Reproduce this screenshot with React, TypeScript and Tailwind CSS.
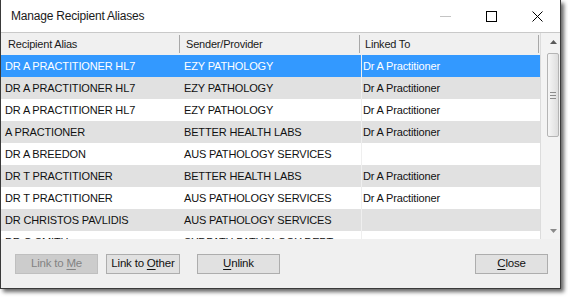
import { Fragment } from 'react';

const rows = [
  { alias: 'DR A PRACTITIONER HL7', sender: 'EZY PATHOLOGY', linked: 'Dr A Practitioner' },
  { alias: 'DR A PRACTITIONER HL7', sender: 'EZY PATHOLOGY', linked: 'Dr A Practitioner' },
  { alias: 'DR A PRACTITIONER HL7', sender: 'EZY PATHOLOGY', linked: 'Dr A Practitioner' },
  { alias: 'A PRACTIONER', sender: 'BETTER HEALTH LABS', linked: 'Dr A Practitioner' },
  { alias: 'DR A BREEDON', sender: 'AUS PATHOLOGY SERVICES', linked: '' },
  { alias: 'DR T PRACTITIONER', sender: 'BETTER HEALTH LABS', linked: 'Dr A Practitioner' },
  { alias: 'DR T PRACTITIONER', sender: 'AUS PATHOLOGY SERVICES', linked: 'Dr A Practitioner' },
  { alias: 'DR CHRISTOS PAVLIDIS', sender: 'AUS PATHOLOGY SERVICES', linked: '' },
  { alias: 'DR G SMITH', sender: 'SYDPATH PATHOLOGY DEPT', linked: '' },
];

function Accel({ text, at }: { text: string; at: number }) {
  return (
    <>
      {text.slice(0, at)}
      <u className="underline-offset-[2px]">{text[at]}</u>
      {text.slice(at + 1)}
    </>
  );
}

export default function App() {
  return (
    <div className="w-[568px] h-[297px] bg-white font-['Liberation_Sans',Arial,sans-serif] text-black">
      <div className="w-[561px] h-[289px] flex flex-col border border-t-0 border-[#3a3a3a] bg-[#f0f0f0] shadow-[3px_3px_4px_rgba(0,0,0,0.6)]">

        {/* Title bar */}
        <div className="h-[32px] bg-white flex items-center shrink-0">
          <span className="pl-[10px] text-[12px] tracking-[-0.2px] text-[#1a1a1a]">Manage Recipient Aliases</span>
          <div className="ml-auto flex h-full">
            <div className="w-[46px] h-full flex items-center justify-center">
              <svg width="11" height="11" viewBox="0 0 11 11">
                <line x1="0" y1="5.5" x2="11" y2="5.5" stroke="#c4c4c4" strokeWidth="1" />
              </svg>
            </div>
            <div className="w-[46px] h-full flex items-center justify-center">
              <svg width="11" height="11" viewBox="0 0 11 11">
                <rect x="0.5" y="0.5" width="10" height="10" fill="none" stroke="#000" strokeWidth="1" />
              </svg>
            </div>
            <div className="w-[46px] h-full flex items-center justify-center">
              <svg width="11" height="11" viewBox="0 0 11 11">
                <path d="M0.5 0.5 L10.5 10.5 M10.5 0.5 L0.5 10.5" stroke="#000" strokeWidth="1" />
              </svg>
            </div>
          </div>
        </div>

        {/* List */}
        <div className="h-[207px] flex bg-white border-t border-[#c9c9c9] overflow-hidden shrink-0">
          <div className="w-[539px] flex flex-col">
            {/* Header */}
            <div className="h-[22px] shrink-0 flex bg-[#f0f0f0] text-[11px] tracking-[-0.2px] text-[#1a1a1a]">
              <div className="w-[179px] flex items-center pl-[7px] border-r border-[#a8a8a8] my-[2px]">Recipient Alias</div>
              <div className="w-[180px] flex items-center pl-[6px] border-r border-[#a8a8a8] my-[2px]">Sender/Provider</div>
              <div className="w-[179px] flex items-center pl-[5px] border-r border-[#a8a8a8] my-[2px]">Linked To</div>
            </div>

            {/* Rows */}
            {rows.map((r, i) => {
              const selected = i === 0;
              const bg = selected ? 'bg-[#3399ff] text-white' : i % 2 === 1 ? 'bg-[#e1e1e1] text-[#111]' : 'bg-white text-[#111]';
              return (
                <Fragment key={i}>
                  <div className={`h-[22px] shrink-0 flex items-center text-[11px] tracking-[-0.15px] ${bg}`}>
                    <div className="w-[180px] pl-[4px] whitespace-nowrap overflow-hidden">{r.alias}</div>
                    <div className="w-[180px] pl-[3px] whitespace-nowrap overflow-hidden">{r.sender}</div>
                    <div className="w-[179px] h-full flex items-center pl-[1px] border-l border-[#efefef] whitespace-nowrap overflow-hidden">{r.linked}</div>
                  </div>
                </Fragment>
              );
            })}
          </div>

          {/* Vertical scrollbar */}
          <div className="flex-1 flex flex-col bg-[#f3f3f3] border-l border-[#dcdcdc]">
            <div className="h-[18px] shrink-0 flex items-center pl-[6px]">
              <div className="w-[12px] flex justify-center">
                <svg width="7" height="4" viewBox="0 0 7 4">
                  <path d="M3.5 0 L7 4 L0 4 Z" fill="#5a5a5a" />
                </svg>
              </div>
            </div>
            <div className="flex-1 flex flex-col pl-[6px]">
              <div className="mt-[2px] w-[12px] h-[84px] rounded-[2px] border border-[#b4b4b4] bg-gradient-to-r from-[#f6f6f6] to-[#dedede] flex flex-col items-center justify-center gap-[2px]">
                <div className="w-[6px] h-px bg-[#8c8c8c]" />
                <div className="w-[6px] h-px bg-[#8c8c8c]" />
                <div className="w-[6px] h-px bg-[#8c8c8c]" />
              </div>
            </div>
            <div className="h-[17px] shrink-0 flex items-center pl-[6px]">
              <div className="w-[12px] flex justify-center">
                <svg width="7" height="4" viewBox="0 0 7 4">
                  <path d="M0 0 L7 0 L3.5 4 Z" fill="#8a8a8a" />
                </svg>
              </div>
            </div>
          </div>
        </div>

        {/* Footer */}
        <div className="flex-1 flex items-center pl-[14px] pr-[12px] text-[11.5px] tracking-[-0.2px]">
          <button className="w-[83px] h-[20px] border border-[#bfbfbf] bg-[#cccccc] text-[#838383]">
            <Accel text="Link to Me" at={8} />
          </button>
          <button className="ml-[8px] w-[74px] h-[20px] border border-[#adadad] bg-[#e1e1e1] text-[#111]">
            <Accel text="Link to Other" at={8} />
          </button>
          <button className="ml-[17px] w-[83px] h-[20px] border border-[#adadad] bg-[#e1e1e1] text-[#111]">
            <Accel text="Unlink" at={0} />
          </button>
          <button className="ml-auto w-[73px] h-[20px] border border-[#adadad] bg-[#e1e1e1] text-[#111]">
            <Accel text="Close" at={0} />
          </button>
        </div>
      </div>
    </div>
  );
}
